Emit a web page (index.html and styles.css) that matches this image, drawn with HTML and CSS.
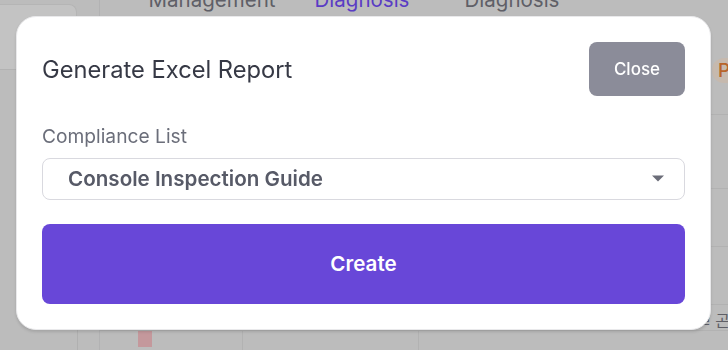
FILE: index.html
```html
<!DOCTYPE html>
<html lang="en">
<head>
<meta charset="utf-8">
<title>Generate Excel Report</title>
<link rel="stylesheet" href="styles.css">
</head>
<body>
<div class="page">
  <aside class="side">
    <div class="side-card"></div>
    <div class="side-fill"></div>
    <div class="side-foot"><div class="side-foot-cell"></div></div>
  </aside>
  <main class="main">
    <nav class="tabs">
      <span class="tab">Management</span>
      <span class="tab active">Diagnosis</span>
      <span class="tab">Diagnosis</span>
    </nav>
    <div class="row row-1"><span class="pill">P</span></div>
    <div class="row row-2"></div>
    <div class="row row-3"></div>
    <div class="row row-4"></div>
    <div class="row row-5"><span class="kr">ㄹ 곤</span></div>
    <div class="row row-6">
      <div class="cell c1"><span class="mark"></span></div>
      <div class="cell c2"></div>
      <div class="cell c3"></div>
    </div>
  </main>
</div>

<div class="modal">
  <div class="modal-head">
    <h2 class="modal-title">Generate Excel Report</h2>
    <button class="btn-close">Close</button>
  </div>
  <label class="field-label">Compliance List</label>
  <div class="select">
    <span class="select-value">Console Inspection Guide</span>
    <svg class="select-arrow" width="12" height="7" viewBox="0 0 12 7"><path d="M0 0.5h12L6 6.5z" fill="#6b6d78"/></svg>
  </div>
  <button class="btn-create">Create</button>
</div>
</body>
</html>
```

FILE: styles.css
```css
* { box-sizing: border-box; }
html, body { margin: 0; padding: 0; }
body {
  width: 728px;
  height: 350px;
  overflow: hidden;
  background: #bcbcbc;
  font-family: Inter, "Noto Sans", sans-serif;
}
.page {
  display: flex;
  height: 350px;
}
.side {
  width: 100px;
  border-right: 1px solid #b2b2b3;
  display: flex;
  flex-direction: column;
}
.side-card {
  margin-top: 4px;
  width: 77px;
  height: 66px;
  background: #c3c3c3;
  border-radius: 0 8px 0 0;
  border-right: 1px solid #b5b5b5;
  border-top: 1px solid #b5b5b5;
  border-bottom: 1px solid #b2b2b2;
}
.side-fill { flex: 1; }
.side-foot {
  height: 20px;
  display: flex;
}
.side-foot-cell {
  width: 78px;
  border-right: 1px solid #b0b0b0;
}
.main {
  flex: 1;
  display: flex;
  flex-direction: column;
  min-width: 0;
}
.tabs {
  height: 16px;
  overflow: hidden;
  display: flex;
  padding-left: 37px;
}
.tab {
  width: 150px;
  text-align: center;
  font-size: 20.5px;
  line-height: 20px;
  margin-top: -10.5px;
  color: #5f5f67;
}
.tab.active { color: #5a3cc4; }
.row {
  border-bottom: 1px solid #b2b2b2;
  display: flex;
  justify-content: flex-end;
  align-items: flex-start;
}
.row-1 { height: 99px; }
.row-2 { height: 74px; }
.row-3 { height: 58px; }
.row-4 { height: 58px; }
.row-5 { height: 25px; border-bottom: none; }
.row-6 {
  flex: 1;
  justify-content: flex-start;
  border-bottom: none;
  border-top: 1px solid #b2b2b2;
}
.pill {
  margin-top: 42px;
  margin-right: -14px;
  width: 30px;
  height: 25px;
  border-radius: 12px;
  background: #c6b9ae;
  color: #b8652b;
  font-size: 19px;
  line-height: 25px;
  padding-left: 6px;
  font-weight: 500;
}
.kr {
  margin-top: 6px;
  margin-right: -2px;
  font-family: "Noto Sans CJK KR", sans-serif;
  font-size: 16px;
  line-height: 18px;
  color: #5f5f66;
}
.cell {
  height: 100%;
  border-right: 1px solid #b2b2b2;
}
.c1 { width: 143px; padding-left: 38px; }
.c2 { width: 176px; }
.c3 { width: 10px; border-right: none; }
.mark {
  display: block;
  width: 14px;
  height: 16px;
  background: #c4989c;
}

.modal {
  position: fixed;
  left: 16px;
  top: 16px;
  width: 695px;
  height: 314px;
  background: #fff;
  border-radius: 20px;
  border: 1px solid #e9e9eb;
  box-shadow: 0 2px 3px rgba(0, 0, 0, 0.12);
  padding: 25px 25px 25px 25px;
  display: flex;
  flex-direction: column;
}
.modal-head {
  display: flex;
  justify-content: space-between;
  align-items: center;
}
.modal-title {
  margin: 0;
  font-size: 23.7px;
  font-weight: 400;
  color: #363945;
}
.btn-close {
  width: 96px;
  height: 54px;
  border: none;
  border-radius: 8px;
  background: #8b8c99;
  color: #fff;
  font-family: Inter, sans-serif;
  font-size: 17px;
  font-weight: 500;
  padding: 0;
}
.field-label {
  margin-top: 28px;
  font-size: 19.2px;
  line-height: 24px;
  color: #6b6e7a;
}
.select {
  margin-top: 10px;
  height: 42px;
  border: 1px solid #d9d9df;
  border-radius: 8px;
  display: flex;
  align-items: center;
  justify-content: space-between;
  padding: 0 20px 0 25px;
}
.select-value {
  font-size: 20.6px;
  font-weight: 600;
  color: #575a67;
}
.select-arrow { display: block; }
.btn-create {
  margin-top: 24px;
  height: 81px;
  border: none;
  border-radius: 8px;
  background: #6847d8;
  color: #fff;
  font-family: Inter, sans-serif;
  font-size: 20.6px;
  font-weight: 600;
}
```
